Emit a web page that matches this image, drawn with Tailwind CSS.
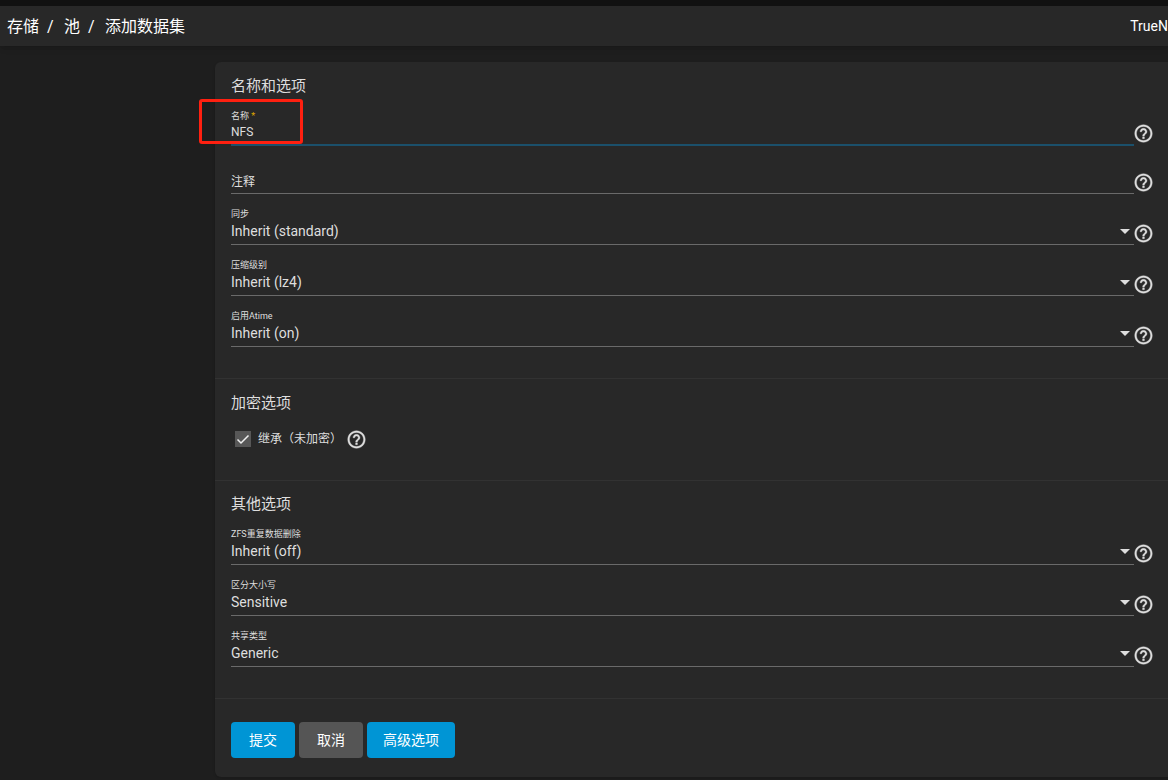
<!DOCTYPE html>
<html lang="zh-CN">
<head>
<meta charset="utf-8">
<meta name="viewport" content="width=device-width, initial-scale=1">
<title>添加数据集</title>
<script src="https://cdn.jsdelivr.net/npm/@tailwindcss/browser@4"></script>
</head>
<body class="flex min-h-screen flex-col overflow-x-hidden bg-[#1e1e1e] font-[Roboto,'Noto_Sans_CJK_SC',sans-serif] text-[#dedede]">
<svg class="hidden" aria-hidden="true">
  <symbol id="help" viewBox="0 0 24 24"><path fill="currentColor" stroke="currentColor" stroke-width="0.400" d="M11 18h2v-2h-2v2zm1-16C6.48 2 2 6.48 2 12s4.480 10 10 10 10-4.480 10-10S17.520 2 12 2zm0 18c-4.410 0-8-3.590-8-8s3.590-8 8-8 8 3.590 8 8-3.590 8-8 8zm0-14c-2.210 0-4 1.790-4 4h2c0-1.100.9-2 2-2s2 .9 2 2c0 2-3 1.750-3 5h2c0-2.250 3-2.500 3-5 0-2.210-1.790-4-4-4z"/></symbol>
  <symbol id="arrow" viewBox="0 0 10 5"><path fill="currentColor" d="M0 0h10L5 5z"/></symbol>
</svg>
<header class="z-10 flex h-[46px] items-center justify-between border-t-6 border-[#111111] bg-[#282828] pl-[7px] text-white shadow-md">
  <nav aria-label="导航" class="flex pt-0.5 text-base leading-6">
    <a href="#">存储</a><span class="w-[25px] pl-2">/</span><a href="#">池</a><span class="w-[25px] pl-2">/</span><a href="#">添加数据集</a>
  </nav>
  <span class="text-sm">TrueN</span>
</header>
<main class="mt-4 mb-[3px] ml-[215px]">
<form class="relative rounded-l-md bg-[#282828] shadow-sm">
  <section class="border-b border-[#323232] pt-[14px] pr-[14px] pb-[31px] pl-4">
    <h2 class="text-[15px] leading-5">名称和选项</h2>
    <div class="flex items-end">
      <div class="flex flex-1 flex-col border-b-2 border-[#1b506b] pt-[14px] pb-0.5">
        <label for="name" class="text-[9px] leading-3">名称 <span class="text-[#e0a800]">*</span></label>
        <input id="name" value="NFS" class="h-5 w-full text-xs outline-none">
      </div>
      <button type="button" aria-label="帮助" class="mb-0.5 -ml-px"><svg class="size-[21px]"><use href="#help"/></svg></button>
    </div>
    <div class="flex items-end">
      <div class="flex flex-1 border-b border-[#6a6a6a] pt-[26px] pb-px">
        <label for="comments" class="text-xs leading-5">注释</label>
        <input id="comments" class="h-5 flex-1 text-xs outline-none">
      </div>
      <button type="button" aria-label="帮助" class="mb-px -ml-px"><svg class="size-[21px]"><use href="#help"/></svg></button>
    </div>
    <div class="flex items-end">
      <div class="relative flex flex-1 flex-col border-b border-[#6a6a6a] pt-[14px] pb-[3px]">
        <label for="sync" class="mb-px text-[9px] leading-3">同步</label>
        <select id="sync" class="h-5 w-full appearance-none text-sm outline-none"><option>Inherit (standard)</option></select>
        <svg class="pointer-events-none absolute right-1 bottom-2.5 h-[5px] w-2.5"><use href="#arrow"/></svg>
      </div>
      <button type="button" aria-label="帮助" class="mb-px -ml-px"><svg class="size-[21px]"><use href="#help"/></svg></button>
    </div>
    <div class="flex items-end">
      <div class="relative flex flex-1 flex-col border-b border-[#6a6a6a] pt-[14px] pb-[3px]">
        <label for="compression" class="mb-px text-[9px] leading-3">压缩级别</label>
        <select id="compression" class="h-5 w-full appearance-none text-sm outline-none"><option>Inherit (lz4)</option></select>
        <svg class="pointer-events-none absolute right-1 bottom-2.5 h-[5px] w-2.5"><use href="#arrow"/></svg>
      </div>
      <button type="button" aria-label="帮助" class="mb-px -ml-px"><svg class="size-[21px]"><use href="#help"/></svg></button>
    </div>
    <div class="flex items-end">
      <div class="relative flex flex-1 flex-col border-b border-[#6a6a6a] pt-[14px] pb-[3px]">
        <label for="atime" class="mb-px text-[9px] leading-3">启用Atime</label>
        <select id="atime" class="h-5 w-full appearance-none text-sm outline-none"><option>Inherit (on)</option></select>
        <svg class="pointer-events-none absolute right-1 bottom-2.5 h-[5px] w-2.5"><use href="#arrow"/></svg>
      </div>
      <button type="button" aria-label="帮助" class="mb-px -ml-px"><svg class="size-[21px]"><use href="#help"/></svg></button>
    </div>
  </section>
  <section class="border-b border-[#323232] pt-[14px] pr-[14px] pb-[29px] pl-4">
    <h2 class="text-[15px] leading-5">加密选项</h2>
    <div class="mt-[14px] flex h-6 items-center pl-1">
      <span class="grid size-4 place-items-center bg-[#575757]">
        <input id="inherit" type="checkbox" checked class="col-start-1 row-start-1 size-4 appearance-none">
        <svg viewBox="0 0 16 16" class="pointer-events-none col-start-1 row-start-1 size-4" fill="none" stroke="#f0f0f0" stroke-width="1.500"><path d="M2.500 8.500 6 12l7.500-7.500"/></svg>
      </span>
      <label for="inherit" class="ml-[7px] text-xs leading-6">继承（未加密）</label>
      <button type="button" aria-label="帮助" class="ml-1"><svg class="size-[21px]"><use href="#help"/></svg></button>
    </div>
  </section>
  <section class="border-b border-[#323232] pt-[13px] pr-[14px] pb-[31px] pl-4">
    <h2 class="text-[15px] leading-5">其他选项</h2>
    <div class="flex items-end">
      <div class="relative flex flex-1 flex-col border-b border-[#6a6a6a] pt-[14px] pb-[3px]">
        <label for="dedup" class="mb-px text-[9px] leading-3">ZFS重复数据删除</label>
        <select id="dedup" class="h-5 w-full appearance-none text-sm outline-none"><option>Inherit (off)</option></select>
        <svg class="pointer-events-none absolute right-1 bottom-2.5 h-[5px] w-2.5"><use href="#arrow"/></svg>
      </div>
      <button type="button" aria-label="帮助" class="mb-px -ml-px"><svg class="size-[21px]"><use href="#help"/></svg></button>
    </div>
    <div class="flex items-end">
      <div class="relative flex flex-1 flex-col border-b border-[#6a6a6a] pt-[14px] pb-[3px]">
        <label for="case" class="mb-px text-[9px] leading-3">区分大小写</label>
        <select id="case" class="h-5 w-full appearance-none text-sm outline-none"><option>Sensitive</option></select>
        <svg class="pointer-events-none absolute right-1 bottom-2.5 h-[5px] w-2.5"><use href="#arrow"/></svg>
      </div>
      <button type="button" aria-label="帮助" class="mb-px -ml-px"><svg class="size-[21px]"><use href="#help"/></svg></button>
    </div>
    <div class="flex items-end">
      <div class="relative flex flex-1 flex-col border-b border-[#6a6a6a] pt-[14px] pb-[3px]">
        <label for="share" class="mb-px text-[9px] leading-3">共享类型</label>
        <select id="share" class="h-5 w-full appearance-none text-sm outline-none"><option>Generic</option></select>
        <svg class="pointer-events-none absolute right-1 bottom-2.5 h-[5px] w-2.5"><use href="#arrow"/></svg>
      </div>
      <button type="button" aria-label="帮助" class="mb-px -ml-px"><svg class="size-[21px]"><use href="#help"/></svg></button>
    </div>
  </section>
  <div class="flex gap-1 pt-[23px] pb-[19px] pl-4 text-sm text-white">
    <button type="button" class="h-9 w-16 rounded bg-[#0095d5]">提交</button>
    <button type="button" class="h-9 w-16 rounded bg-[#555555]">取消</button>
    <button type="button" class="h-9 w-[88px] rounded bg-[#0095d5]">高级选项</button>
  </div>
  <div class="pointer-events-none absolute top-[37px] -left-4 h-[45px] w-[104px] rounded-[3px] border-3 border-[#ff2010]"></div>
</form>
</main>
</body>
</html>
